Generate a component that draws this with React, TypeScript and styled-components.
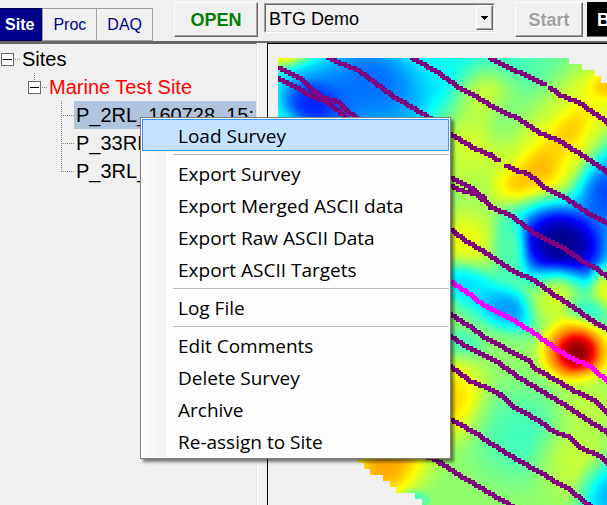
import React from "react";
import styled, { createGlobalStyle } from "styled-components";

const GlobalStyle = createGlobalStyle`
  * { box-sizing: border-box; }
  body { margin: 0; background: #f0f0f0; overflow: hidden; }
  button, select { font: inherit; border-radius: 0; margin: 0; }
`;

const Window = styled.div`
  position: relative;
  display: flex;
  flex-direction: column;
  height: 100vh;
  overflow: hidden;
  color: #000;
  background: #f0f0f0;
  font: 20px/28px "Liberation Sans", Arial, sans-serif;
`;

const Toolbar = styled.header`
  display: flex;
  flex: none;
  height: 43px;
  padding-top: 2px;
  border-bottom: 2px solid #696969;
  overflow: hidden;
`;

const Tabs = styled.nav`
  display: flex;
  flex: none;
  width: 153px;
  padding-top: 6px;
  margin-right: 21px;
`;

const Tab = styled.button<{ $active?: boolean }>`
  flex: 1 0 auto;
  height: 33px;
  padding: ${(p) => (p.$active ? "0 7px 0 4px" : "0 9px")};
  border: 1px solid ${(p) => (p.$active ? "#000050" : "#a0a0a0")};
  border-left-width: ${(p) => (p.$active ? "0" : "1px")};
  background: ${(p) => (p.$active ? "#00008b" : "#f0f0f0")};
  color: ${(p) => (p.$active ? "#fff" : "#00008b")};
  font-size: 16px;
  font-weight: ${(p) => (p.$active ? 700 : 400)};
  white-space: nowrap;

  & + & { margin-left: -1px; }
`;

const RaisedButton = styled.button<{ $tone: "open" | "start" | "dark" }>`
  flex: none;
  width: ${(p) => (p.$tone === "open" ? 84 : 68)}px;
  height: 35px;
  margin-right: ${(p) => (p.$tone === "start" ? 4 : 0)}px;
  padding: ${(p) => (p.$tone === "dark" ? "0 6px 0 9px" : "0 6px")};
  border: 1px solid;
  border-color: ${(p) => (p.$tone === "dark" ? "#000 #696969 #696969 #000" : "#fff #696969 #696969 #fff")};
  box-shadow: ${(p) => (p.$tone === "dark" ? "none" : "inset -1px -1px #a0a0a0")};
  background: ${(p) => (p.$tone === "dark" ? "#000" : "#f0f0f0")};
  color: ${(p) => ({ open: "#008000", start: "#a0a0a0", dark: "#fff" })[p.$tone]};
  text-shadow: ${(p) => (p.$tone === "start" ? "1px 1px #fff" : "none")};
  text-align: ${(p) => (p.$tone === "dark" ? "left" : "center")};
  font-size: 18px;
  font-weight: 700;
  white-space: nowrap;
`;

const Combo = styled.div`
  position: relative;
  flex: none;
  width: 231px;
  height: 30px;
  margin: 1px 20px 0 6px;
  border: 1px solid;
  border-color: #a0a0a0 #fff #fff #a0a0a0;

  select {
    display: block;
    width: 100%;
    height: 28px;
    padding: 0 20px 0 3px;
    border: 1px solid;
    border-color: #696969 #e3e3e3 #e3e3e3 #696969;
    appearance: none;
    background: #f0f0f0;
    color: #000;
    font-size: 18px;
  }
`;

const ComboArrow = styled.span`
  position: absolute;
  top: 1px;
  right: 1px;
  display: grid;
  place-items: center;
  width: 17px;
  height: 25px;
  border: 1px solid;
  border-color: #fff #696969 #696969 #fff;
  box-shadow: inset -1px -1px #a0a0a0;
  background: #f0f0f0;
  pointer-events: none;

  svg { display: block; }
`;

const Body = styled.main`
  display: flex;
  flex: 1;
  min-height: 0;
`;

const TreePanel = styled.section`
  flex: none;
  width: 257px;
  padding-top: 1px;
  border-top: 1px solid #696969;
  border-right: 1px solid #e3e3e3;
  box-shadow: 1px 0 #fff;
  overflow: hidden;
`;

const dots = "repeating-linear-gradient(#808080 0 1px, transparent 1px 2px)";

const TreeList = styled.ul<{ $line?: string }>`
  margin: 0;
  padding: 0;
  list-style: none;
  background: ${(p) => (p.$line ? `${dots} 7px 0 / 1px ${p.$line} no-repeat` : "none")};

  & & { margin-left: 27px; }
`;

const TreeRow = styled.div`
  display: flex;
  align-items: center;
  height: 28px;
  white-space: nowrap;
`;

const Expander = styled.button`
  display: grid;
  place-items: center;
  flex: none;
  width: 13px;
  height: 13px;
  margin: 0 1px;
  padding: 0;
  border: 1px solid #696969;
  background: #fff;

  &::before {
    content: "";
    width: 9px;
    height: 1px;
    background: #000;
  }
`;

const Branch = styled.span<{ $leaf?: boolean }>`
  flex: none;
  width: ${(p) => (p.$leaf ? 13 : 5)}px;
  height: 1px;
  margin-left: ${(p) => (p.$leaf ? 7 : 0)}px;
  background: repeating-linear-gradient(90deg, #808080 0 1px, transparent 1px 2px);
`;

const TreeLabel = styled.span<{ $tone?: "alert" | "selected" }>`
  padding: 0 2px;
  color: ${(p) => (p.$tone === "alert" ? "#f00" : "#000")};
  background: ${(p) => (p.$tone === "selected" ? "#b0c4de" : "transparent")};
`;

const PlotPanel = styled.section`
  flex: 1;
  min-width: 0;
  margin-left: 10px;
  border-top: 1px solid #000;
  border-left: 1px solid #000;
  overflow: hidden;

  svg { display: block; }
`;

const Menu = styled.div`
  position: absolute;
  top: 117px;
  left: 140px;
  display: flex;
  flex-direction: column;
  width: 311px;
  padding: 1px;
  border: 1px solid #808080;
  background: linear-gradient(90deg, #fcfcfc, #f0f0f0) 1px 1px / 24px calc(100% - 2px) no-repeat #fdfdfd;
  box-shadow: 3px 3px 3px rgba(0, 0, 0, 0.5);
`;

const MenuItem = styled.button<{ $active?: boolean }>`
  height: 32px;
  padding: 2px 0 0 35px;
  border: 1px solid ${(p) => (p.$active ? "#3399ff" : "transparent")};
  background: ${(p) => (p.$active ? "#c4e1ff" : "transparent")};
  color: #000;
  font-family: "Open Sans", "Segoe UI", sans-serif;
  font-size: 19px;
  line-height: 28px;
  text-align: left;
  white-space: nowrap;
`;

const Separator = styled.hr`
  width: calc(100% - 31px);
  height: 1px;
  margin: 3px 0 2px 31px;
  border: 0;
  background: #bdbdbd;
`;

type Blob = [cx: number, cy: number, rx: number, ry: number, angle: number, value: number];

// Field strength, 0 (deep blue) to 1 (dark red), painted in order over a 0.5 base.
const blobs: Blob[] = [
  [500, 60, 130, 50, 0, 0.45],
  [440, 85, 110, 90, 0, 0.39],
  [395, 110, 90, 90, 0, 0.35],
  [350, 95, 120, 80, 20, 0.29],
  [278, 125, 28, 40, 0, 0.42],
  [372, 80, 66, 52, 30, 0.23],
  [316, 102, 62, 42, 15, 0.2],
  [313, 104, 34, 26, 15, 0.16],
  [284, 52, 42, 22, -10, 0.64],
  [487, 96, 44, 44, 0, 0.57],
  [470, 145, 65, 70, 20, 0.58],
  [515, 120, 40, 40, 0, 0.5],
  [600, 95, 60, 60, 0, 0.6],
  [550, 155, 104, 58, -52, 0.63],
  [528, 188, 44, 34, 0, 0.7],
  [568, 133, 52, 22, -52, 0.67],
  [540, 168, 34, 26, -52, 0.69],
  [606, 86, 24, 20, 0, 0.68],
  [622, 185, 50, 84, 20, 0.28],
  [604, 200, 44, 60, 20, 0.19],
  [560, 245, 90, 72, 15, 0.34],
  [562, 244, 74, 58, 15, 0.1],
  [562, 243, 48, 40, 15, 0.01],
  [466, 240, 46, 48, 0, 0.61],
  [510, 250, 22, 60, 0, 0.46],
  [490, 300, 80, 38, 28, 0.36],
  [465, 285, 40, 24, 20, 0.35],
  [508, 309, 38, 26, 20, 0.28],
  [556, 300, 38, 44, 20, 0.58],
  [607, 290, 24, 32, 0, 0.6],
  [590, 315, 34, 24, 30, 0.41],
  [460, 345, 36, 26, 0, 0.43],
  [575, 352, 52, 48, 0, 0.66],
  [576, 352, 44, 40, 0, 0.88],
  [577, 352, 24, 22, 0, 0.99],
  [452, 398, 50, 62, 0, 0.66],
  [520, 435, 66, 74, 30, 0.44],
  [575, 460, 50, 60, 20, 0.57],
  [590, 405, 50, 40, 0, 0.56],
  [612, 495, 44, 60, 30, 0.3],
  [395, 462, 70, 50, -50, 0.66],
  [384, 466, 46, 36, -40, 0.71],
  [416, 500, 20, 14, 0, 0.43],
];

const falloff: [number, number][] = [
  [0, 1], [0.15, 0.96], [0.3, 0.84], [0.45, 0.64], [0.6, 0.41], [0.75, 0.2], [0.9, 0.05], [1, 0],
];

type Track = [number, number][];

const tracks: Track[] = [
  [[278, 68], [297, 77], [310, 88], [323, 98], [337, 102], [348, 112], [357, 118]],
  [[278, 78], [293, 86], [313, 98], [323, 100], [340, 113], [347, 118]],
  [[328, 58], [340, 63], [357, 70], [373, 82], [393, 97], [407, 105], [430, 119]],
  [[412, 58], [433, 70], [457, 87], [477, 98], [497, 110], [520, 120], [540, 133], [557, 140], [585, 158], [607, 173]],
  [[490, 58], [517, 72], [543, 84]],
  [[550, 88], [560, 95], [577, 102], [607, 123]],
  [[450, 134], [477, 150], [490, 155], [499, 161]],
  [[506, 165], [517, 171], [527, 174], [543, 187], [567, 200], [587, 213], [607, 224]],
  [[450, 177], [470, 187], [485, 199]],
  [[450, 185], [460, 190], [475, 194], [490, 207], [507, 214], [533, 233], [557, 245], [580, 260], [593, 267], [607, 278]],
  [[450, 229], [467, 242], [483, 252], [510, 270], [533, 280], [553, 295], [573, 308], [593, 322], [607, 329]],
  [[450, 314], [467, 325], [483, 337], [503, 348], [527, 360], [533, 368], [563, 385], [573, 391], [593, 400], [607, 414]],
  [[450, 336], [463, 345], [493, 360], [517, 377], [547, 395], [567, 407], [583, 418], [607, 433]],
  [[450, 366], [470, 381], [487, 388], [500, 395], [512, 406], [537, 420], [553, 432], [570, 438], [580, 448], [597, 455], [607, 464]],
  [[450, 419], [473, 432], [487, 442], [513, 458], [527, 466], [543, 474], [553, 482], [567, 488], [583, 502], [590, 507]],
  [[427, 457], [440, 463], [463, 478], [493, 496], [512, 507]],
];

const activeTrack: Track = [
  [450, 281], [467, 293], [483, 306], [507, 317], [523, 327], [540, 338], [556, 349], [570, 358], [587, 365], [607, 382],
];

// Each track is stamped as rectangular survey marks snapped to the plot's cells.
function stamp(track: Track): string {
  let d = "";
  for (let i = 1; i < track.length; i++) {
    const [x0, y0] = track[i - 1];
    const [x1, y1] = track[i];
    for (let x = x0; x <= x1; x += 2) {
      const y = y0 + ((y1 - y0) * (x - x0)) / (x1 - x0);
      d += `M${Math.round(x / 2) * 2 - 2} ${Math.round(y / 2) * 2 - 2}h5v4h-5z`;
    }
  }
  return d;
}

const outline =
  "M278 58H569V64H582V70H595V76H601V83H607V505H422V499H415V493H396V487H390V481H383V475H370V469H364V463H358V457H278Z";

function SurveyMap() {
  return (
    <svg width="339" height="461" viewBox="268 44 339 461" role="img" aria-label="Survey map">
      <defs>
        <clipPath id="outline"><path d={outline} /></clipPath>
        <filter id="jet" filterUnits="userSpaceOnUse" x="268" y="44" width="339" height="461" colorInterpolationFilters="sRGB">
          <feComponentTransfer>
            <feFuncR type="table" tableValues="0 0 0 0 .5 1 1 1 .5" />
            <feFuncG type="table" tableValues="0 0 .5 1 1 1 .5 0 0" />
            <feFuncB type="table" tableValues=".5 1 1 1 .5 0 0 0 0" />
          </feComponentTransfer>
        </filter>
        {blobs.map(([, , , , , value], i) => {
          const g = Math.round(value * 255);
          return (
            <radialGradient key={i} id={`blob${i}`}>
              {falloff.map(([offset, alpha]) => (
                <stop key={offset} offset={offset} stopColor={`rgb(${g},${g},${g})`} stopOpacity={alpha} />
              ))}
            </radialGradient>
          );
        })}
      </defs>
      <g clipPath="url(#outline)">
        <g filter="url(#jet)">
          <rect x="268" y="44" width="339" height="461" fill="rgb(132,132,132)" />
          {blobs.map(([cx, cy, rx, ry, angle], i) => (
            <ellipse key={i} cx={cx} cy={cy} rx={rx} ry={ry} transform={`rotate(${angle} ${cx} ${cy})`} fill={`url(#blob${i})`} />
          ))}
        </g>
        <path d={tracks.map(stamp).join("")} fill="#800080" shapeRendering="crispEdges" />
        <path d={stamp(activeTrack)} fill="#f0f" shapeRendering="crispEdges" />
      </g>
    </svg>
  );
}

const surveys = ["P_2RL_160728_15:15", "P_33RL_160728", "P_3RL_160728"];

const menuGroups = [
  ["Load Survey"],
  ["Export Survey", "Export Merged ASCII data", "Export Raw ASCII Data", "Export ASCII Targets"],
  ["Log File"],
  ["Edit Comments", "Delete Survey", "Archive", "Re-assign to Site"],
];

export default function App() {
  return (
    <Window>
      <GlobalStyle />
      <Toolbar>
        <Tabs>
          <Tab $active>Site</Tab>
          <Tab>Proc</Tab>
          <Tab>DAQ</Tab>
        </Tabs>
        <RaisedButton $tone="open">OPEN</RaisedButton>
        <Combo>
          <select aria-label="Project" defaultValue="BTG Demo">
            <option>BTG Demo</option>
          </select>
          <ComboArrow>
            <svg width="7" height="4" viewBox="0 0 7 4" shapeRendering="crispEdges" aria-hidden="true">
              <path d="M0 0h7v1h-1v1h-1v1h-1v1h-1v-1h-1v-1h-1v-1h-1z" />
            </svg>
          </ComboArrow>
        </Combo>
        <RaisedButton $tone="start" disabled>Start</RaisedButton>
        <RaisedButton $tone="dark">B</RaisedButton>
      </Toolbar>
      <Body>
        <TreePanel>
          <TreeList>
            <li>
              <TreeRow>
                <Expander aria-label="Collapse Sites" />
                <Branch />
                <TreeLabel>Sites</TreeLabel>
              </TreeRow>
              <TreeList $line="8px">
                <li>
                  <TreeRow>
                    <Expander aria-label="Collapse Marine Test Site" />
                    <Branch />
                    <TreeLabel $tone="alert">Marine Test Site</TreeLabel>
                  </TreeRow>
                  <TreeList $line="calc(100% - 14px)">
                    {surveys.map((name, i) => (
                      <li key={name}>
                        <TreeRow>
                          <Branch $leaf />
                          <TreeLabel $tone={i === 0 ? "selected" : undefined}>{name}</TreeLabel>
                        </TreeRow>
                      </li>
                    ))}
                  </TreeList>
                </li>
              </TreeList>
            </li>
          </TreeList>
        </TreePanel>
        <PlotPanel>
          <SurveyMap />
        </PlotPanel>
      </Body>
      <Menu role="menu">
        {menuGroups.map((group, g) => (
          <React.Fragment key={group[0]}>
            {g > 0 && <Separator />}
            {group.map((label) => (
              <MenuItem key={label} role="menuitem" $active={label === "Load Survey"}>
                {label}
              </MenuItem>
            ))}
          </React.Fragment>
        ))}
      </Menu>
    </Window>
  );
}
